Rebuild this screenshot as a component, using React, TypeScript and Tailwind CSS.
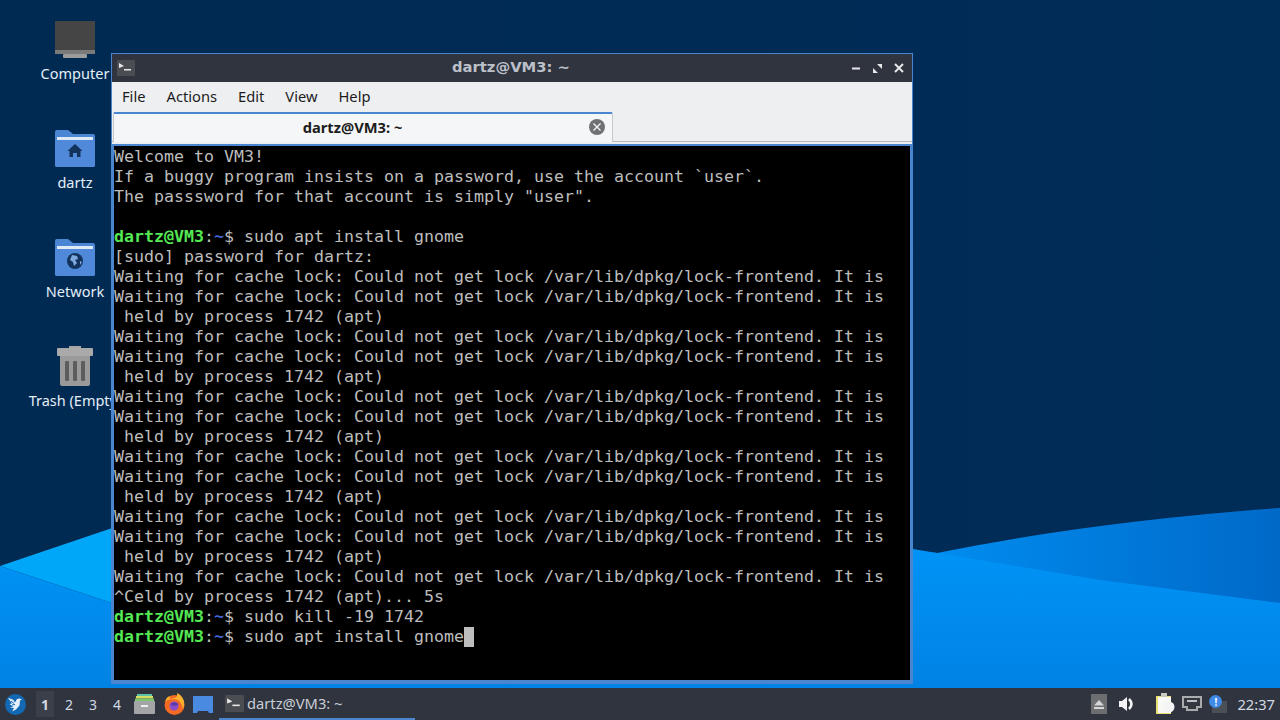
const sans = "font-['Noto_Sans','Open_Sans',sans-serif]";

type Line = { text: string; prompt?: boolean };

const lock = "Waiting for cache lock: Could not get lock /var/lib/dpkg/lock-frontend. It is";
const held = " held by process 1742 (apt)";

const lines: Line[] = [
  { text: "Welcome to VM3!" },
  { text: "If a buggy program insists on a password, use the account `user`." },
  { text: 'The passsword for that account is simply "user".' },
  { text: " " },
  { text: "sudo apt install gnome", prompt: true },
  { text: "[sudo] password for dartz:" },
  { text: lock },
  { text: lock },
  { text: held },
  { text: lock },
  { text: lock },
  { text: held },
  { text: lock },
  { text: lock },
  { text: held },
  { text: lock },
  { text: lock },
  { text: held },
  { text: lock },
  { text: lock },
  { text: held },
  { text: lock },
  { text: "^Celd by process 1742 (apt)... 5s" },
  { text: "sudo kill -19 1742", prompt: true },
];

function TerminalGlyph({ className }: { className: string }) {
  return (
    <svg className={className} viewBox="0 0 18 16">
      <rect width="18" height="16" rx="1" fill="#4a4d52" />
      <path d="M2 3l5 3-5 2z" fill="#e8e8e8" />
      <rect x="7" y="9" width="7" height="1.5" fill="#e8e8e8" />
    </svg>
  );
}

function Folder({ kind }: { kind: "home" | "globe" }) {
  return (
    <svg width="40" height="37" viewBox="0 0 40 37">
      <path d="M0 2q0-2 2-2h11l5 4h20q2 0 2 2v29q0 2-2 2H2q-2 0-2-2z" fill="#4a86d4" />
      <path d="M2 7h36v3H2z" fill="#dfe9f6" />
      <path d="M0 10h40v25q0 2-2 2H2q-2 0-2-2z" fill="#5189da" />
      {kind === "home" ? (
        <path d="M20 14l7.500 7h-2v6h-3.500v-4h-4v4h-3.500v-6h-2z" fill="#12335c" />
      ) : (
        <>
          <circle cx="20" cy="22" r="8" fill="#12335c" />
          <path d="M17 16l5 1 1 3-3 1 2 3-3 3-1-4-3-2zM25 22l2 1-2 3z" fill="#7fa8dc" />
        </>
      )}
    </svg>
  );
}

function DesktopIcon({ label, children }: { label: string; children: React.ReactNode }) {
  return (
    <div className="flex h-[109px] w-[100px] flex-col items-center">
      <div className="flex h-[44px] items-center">{children}</div>
      <span className={`${sans} mt-[2px] whitespace-nowrap text-[14.500px] leading-[20px] text-[#e4eef8]`}>{label}</span>
    </div>
  );
}

function Wallpaper() {
  return (
    <svg className="absolute inset-0" width="1280" height="720" viewBox="0 0 1280 720">
      <defs>
        <linearGradient id="sky" x1="0" y1="0" x2="1" y2="0">
          <stop offset="0" stopColor="#012a52" />
          <stop offset="1" stopColor="#002c58" />
        </linearGradient>
        <linearGradient id="low" x1="0" y1="0" x2="0" y2="1">
          <stop offset="0" stopColor="#0093f6" />
          <stop offset="1" stopColor="#007fe0" />
        </linearGradient>
        <linearGradient id="band" x1="0" y1="0" x2="1" y2="0">
          <stop offset="0" stopColor="#008ff2" />
          <stop offset="1" stopColor="#0069c8" />
        </linearGradient>
      </defs>
      <rect width="1280" height="720" fill="url(#sky)" />
      <path d="M0 566L130 522V609z" fill="#00a6f7" />
      <path d="M913 549L937 553Q1090 522 1280 508V640H913z" fill="url(#band)" />
      <path d="M0 566L130 609H900V549L937 553L1100 580L1280 603V720H0z" fill="url(#low)" />
    </svg>
  );
}

function TabBar() {
  return (
    <div className="h-[32px] bg-[#eeeff1]">
      <div className="flex h-[30px] items-stretch border-b border-[#b4b6b8]">
        <div className="-mb-[1px] ml-[1px] flex w-[500px] items-center rounded-t-[2px] border-x border-t-2 border-x-[#c4c8cc] border-t-[#4a86cf] bg-[#f5f6f7] pb-[2px] pl-[2px] pr-[7px]">
          <span className={`${sans} flex-1 text-center text-[14.700px] font-bold text-[#1c1c1c]`}>dartz@VM3: ~</span>
          <svg width="16" height="16" viewBox="0 0 16 16">
            <circle cx="8" cy="8" r="8" fill="#6f7173" />
            <path d="M4.500 4.500l7 7m0-7l-7 7" stroke="#f5f5f5" strokeWidth="1.300" />
          </svg>
        </div>
      </div>
    </div>
  );
}

function Terminal() {
  return (
    <div className="flex-1 overflow-hidden border-x-2 border-y-2 border-b-[3px] border-[#4a86cf] bg-black font-['DejaVu_Sans_Mono',monospace] text-[16.610px] leading-[20px] text-[#bdbdbd]">
      <div className="pt-[1px]">
        {lines.map((line, i) => (
          <div key={i} className="h-[20px] whitespace-pre">
            {line.prompt && <Prompt />}
            {line.text}
          </div>
        ))}
        <div className="flex h-[20px] whitespace-pre">
          <Prompt />
          sudo apt install gnome
          <span className="inline-block h-[20px] w-[10px] bg-[#bdbdbd]" />
        </div>
      </div>
    </div>
  );
}

function Prompt() {
  return (
    <span>
      <span className="font-bold text-[#55e855]">dartz@VM3</span>
      <span>:</span>
      <span className="font-bold text-[#3f63d8]">~</span>
      <span>$ </span>
    </span>
  );
}

function TerminalWindow() {
  return (
    <div className="absolute left-[111px] top-[53px] flex h-[631px] w-[802px] flex-col border border-[#4a86cf] bg-[#4a86cf]">
      <div className="flex h-[28px] items-center bg-[#2f343f] pl-[5px] pr-[8px]">
        <TerminalGlyph className="h-[16px] w-[18px]" />
        <span className="flex-1 pb-[2px] pl-[35px] text-center font-['DejaVu_Sans',sans-serif] text-[14.750px] font-bold text-[#bcc0c8]">dartz@VM3: ~</span>
        <div className="flex items-center gap-[11px]">
          <svg width="9" height="9" viewBox="0 0 9 9"><rect y="3.500" width="8" height="2" fill="#e6e8ea" /></svg>
          <svg width="11" height="11" viewBox="0 0 11 11"><path d="M5 1h5v5zM6 10H1V5z" fill="#e6e8ea" /></svg>
          <svg width="10" height="10" viewBox="0 0 10 10"><path d="M1 1l8 8m0-8l-8 8" stroke="#e6e8ea" strokeWidth="2" /></svg>
        </div>
      </div>
      <div className={`${sans} flex h-[30px] items-center gap-[21px] bg-[#eeeff1] pb-[2px] pl-[10px] text-[14.700px] text-[#1c1c1c]`}>
        <span>File</span>
        <span>Actions</span>
        <span>Edit</span>
        <span>View</span>
        <span>Help</span>
      </div>
      <TabBar />
      <Terminal />
    </div>
  );
}

function TaskbarLeft() {
  return (
    <div className="flex h-full items-center">
      <svg className="ml-[5px]" width="21" height="21" viewBox="0 0 21 21">
        <circle cx="10.500" cy="10.500" r="10.500" fill="#1268b3" />
        <path d="M3 4l5 1.500 2 3 2-3.500 2.500-.5 2.500 1-2 1-.5 5-3.500 4-4 2 2-3.500-4-.5 3-1-3.500-2.500 2.500-.5z" fill="#e4effa" />
        <path d="M6 7l3 2.500M7 11l3-.5" stroke="#1268b3" strokeWidth="1" />
      </svg>
      <div className={`${sans} ml-[10px] flex text-[14px] text-[#d3dae3]`}>
        <span className="flex h-[26px] w-[18px] items-center justify-center bg-[#3a3f4a] font-bold">1</span>
        <span className="ml-[6px] flex h-[26px] w-[18px] items-center justify-center">2</span>
        <span className="ml-[6px] flex h-[26px] w-[18px] items-center justify-center">3</span>
        <span className="ml-[6px] flex h-[26px] w-[18px] items-center justify-center">4</span>
      </div>
      <svg className="ml-[8px]" width="21" height="20" viewBox="0 0 21 20">
        <path d="M3 0h15v2H3z" fill="#5cc2a8" />
        <path d="M2 2h17v2.500H2z" fill="#d7dd64" />
        <path d="M1 4.500h19V7H1z" fill="#7cc86e" />
        <rect y="7" width="21" height="13" rx="1" fill="#a3a5a6" />
        <rect x="7" y="11" width="7" height="2" fill="#f0f0f0" />
      </svg>
      <svg className="ml-[9px]" width="21" height="22" viewBox="0 0 21 22">
        <circle cx="10.500" cy="12" r="10" fill="#f26a24" />
        <path d="M1 9Q2 4 6 3q-1 2 0 3 3-1 5-1 3-2 2-5 5 2 7 8 1 4-1 8-2-10-9-10-6 0-10 3z" fill="#fbb02e" />
        <circle cx="10" cy="13" r="4.500" fill="#8a4cc8" />
        <path d="M6 11q4-3 9 0l-4 2q-3 0-5-2z" fill="#5a3aa8" />
      </svg>
      <svg className="ml-[8px]" width="20" height="17" viewBox="0 0 20 17">
        <path d="M0 0h20v17h-4l-1-2H5l-1 2H0z" fill="#4a8ae0" />
      </svg>
      <div className={`${sans} ml-[6px] flex h-full w-[196px] items-center border-b-2 border-[#4a86cf] pl-[6px] text-[14.700px] text-[#c9ced6]`}>
        <TerminalGlyph className="h-[17px] w-[19px]" />
        <span className="ml-[3px]">dartz@VM3: ~</span>
      </div>
    </div>
  );
}

function Tray() {
  return (
    <div className="ml-auto flex h-full items-center">
      <div className="flex h-[20px] w-[16px] items-center justify-center bg-[#6c6e70]">
        <svg width="10" height="9" viewBox="0 0 10 9"><path d="M5 0l5 5.500H0zM0 7h10v2H0z" fill="#d6d6d6" /></svg>
      </div>
      <svg className="ml-[12px]" width="16" height="14" viewBox="0 0 16 14">
        <path d="M0 4h3l5-4v14l-5-4H0z" fill="#f4f4f4" />
        <path d="M10 2q5 5 0 10" stroke="#f4f4f4" strokeWidth="2.500" fill="none" />
      </svg>
      <svg className="ml-[21px]" width="19" height="22" viewBox="0 0 19 22">
        <rect y="3" width="15" height="18" fill="#e8e070" />
        <rect x="2" y="4" width="13" height="16" fill="#f8f8f4" />
        <rect x="5" y="0" width="6" height="4" fill="#c9c9c0" />
        <circle cx="13" cy="14" r="5.500" fill="#f4f4f4" />
      </svg>
      <svg className="ml-[7px]" width="20" height="17" viewBox="0 0 20 17">
        <path d="M0 0h20v12h-4v3H4v-3H0z" fill="#a9abad" />
        <path d="M2 2h16v8h-4v3H6v-3H2z" fill="#33373f" />
        <path d="M5 4h10v2H5z" fill="#c0c2c4" />
      </svg>
      <div className="relative ml-[7px] h-[18px] w-[18px]">
        <div className="absolute bottom-0 right-0 h-[12px] w-[15px] bg-[#4a4e55]" />
        <div className={`${sans} absolute left-0 top-0 flex h-[13px] w-[13px] items-center justify-center rounded-full bg-[#3f8ae6] text-[10px] font-bold leading-none text-white`}>!</div>
      </div>
      <span className={`${sans} ml-[10px] mr-[5px] text-[14.700px] text-[#d3dae3]`}>22:37</span>
    </div>
  );
}

export default function App() {
  return (
    <div className="relative h-[720px] w-[1280px] overflow-hidden bg-[#012a52]">
      <Wallpaper />

      <div className="absolute left-[25px] top-[17px] flex flex-col">
        <DesktopIcon label="Computer">
          <svg width="40" height="37" viewBox="0 0 40 37">
            <rect width="40" height="29" fill="#454545" />
            <rect y="29" width="40" height="4" fill="#7a7a7a" />
            <rect x="8" y="33" width="24" height="4" rx="1" fill="#9b9b9b" />
          </svg>
        </DesktopIcon>
        <DesktopIcon label="dartz"><Folder kind="home" /></DesktopIcon>
        <DesktopIcon label="Network"><Folder kind="globe" /></DesktopIcon>
        <DesktopIcon label="Trash (Empty)">
          <svg width="36" height="40" viewBox="0 0 36 40">
            <rect x="12" y="0" width="12" height="4" fill="#a6a6a6" />
            <rect y="2" width="36" height="8" rx="1" fill="#a9a9a9" />
            <path d="M3 10h30v28q0 2-2 2H5q-2 0-2-2z" fill="#9a9a9a" />
            <rect x="8" y="15" width="4" height="20" rx="1" fill="#5d5d5d" />
            <rect x="16" y="15" width="4" height="20" rx="1" fill="#5d5d5d" />
            <rect x="24" y="15" width="4" height="20" rx="1" fill="#5d5d5d" />
          </svg>
        </DesktopIcon>
      </div>

      <TerminalWindow />

      <div className="absolute bottom-0 left-0 flex h-[32px] w-[1280px] items-center bg-[#2f343f]">
        <TaskbarLeft />
        <Tray />
      </div>
    </div>
  );
}
